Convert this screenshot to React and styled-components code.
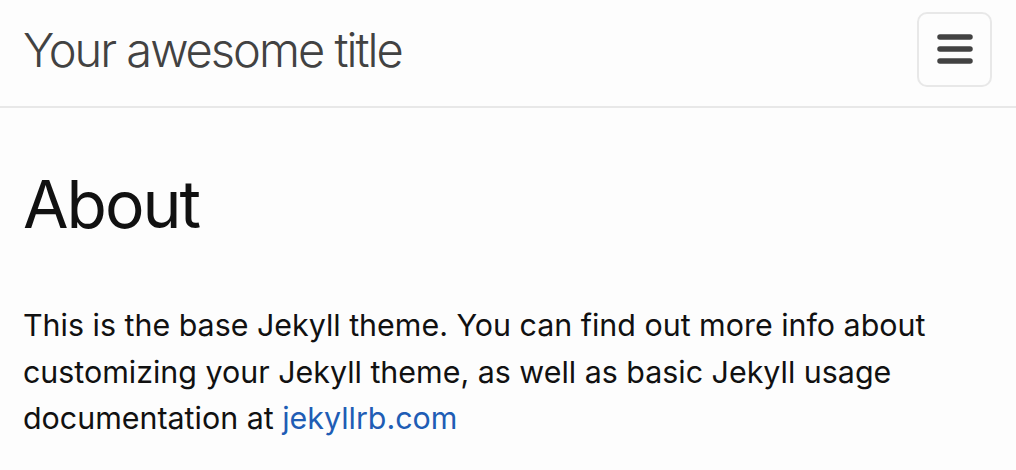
import React from "react";
import styled, { createGlobalStyle } from "styled-components";

const Global = createGlobalStyle`
  html, body { margin: 0; padding: 0; background: #fdfdfd; }
  body { font-family: Inter, "Noto Sans", sans-serif; color: #111; }
`;

const Header = styled.header`
  display: flex;
  align-items: center;
  justify-content: space-between;
  padding: 0 24px 0 23px;
  border-bottom: 2px solid #e8e8e8;
  box-sizing: border-box;
  height: 108px;
`;

const SiteTitle = styled.a`
  font-size: 47px;
  font-weight: 300;
  letter-spacing: -2px;
  color: #424242;
  text-decoration: none;
  margin-top: -8px;
`;

const MenuButton = styled.button`
  width: 75px;
  height: 75px;
  border: 2px solid #e8e8e8;
  border-radius: 10px;
  background: #fdfdfd;
  display: flex;
  align-items: center;
  justify-content: center;
  padding: 0;
  margin-top: -8px;
`;

const Main = styled.main`
  padding: 0 23px;
`;

const Title = styled.h1`
  font-size: 66px;
  font-weight: 400;
  letter-spacing: -2px;
  margin: 63px 0 0;
  line-height: 1;
  color: #111;
`;

const Text = styled.p`
  font-size: 30.4px;
  line-height: 46.7px;
  margin: 65px 0 0;
  color: #111;
`;

const Link = styled.a`
  color: #1f5db5;
  text-decoration: none;
`;

export default function App() {
  return (
    <>
      <Global />
      <Header>
        <SiteTitle href="#">Your awesome title</SiteTitle>
        <MenuButton aria-label="menu">
          <svg width="38" height="32" viewBox="0 0 38 32">
            <g stroke="#424242" strokeWidth="5.5" strokeLinecap="round">
              <line x1="4" y1="4" x2="34" y2="4" />
              <line x1="4" y1="16" x2="34" y2="16" />
              <line x1="4" y1="28" x2="34" y2="28" />
            </g>
          </svg>
        </MenuButton>
      </Header>
      <Main>
        <Title>About</Title>
        <Text>
          This is the base Jekyll theme. You can find out more info about customizing your Jekyll
          theme, as well as basic Jekyll usage documentation at{" "}
          <Link href="#">jekyllrb.com</Link>
        </Text>
      </Main>
    </>
  );
}
